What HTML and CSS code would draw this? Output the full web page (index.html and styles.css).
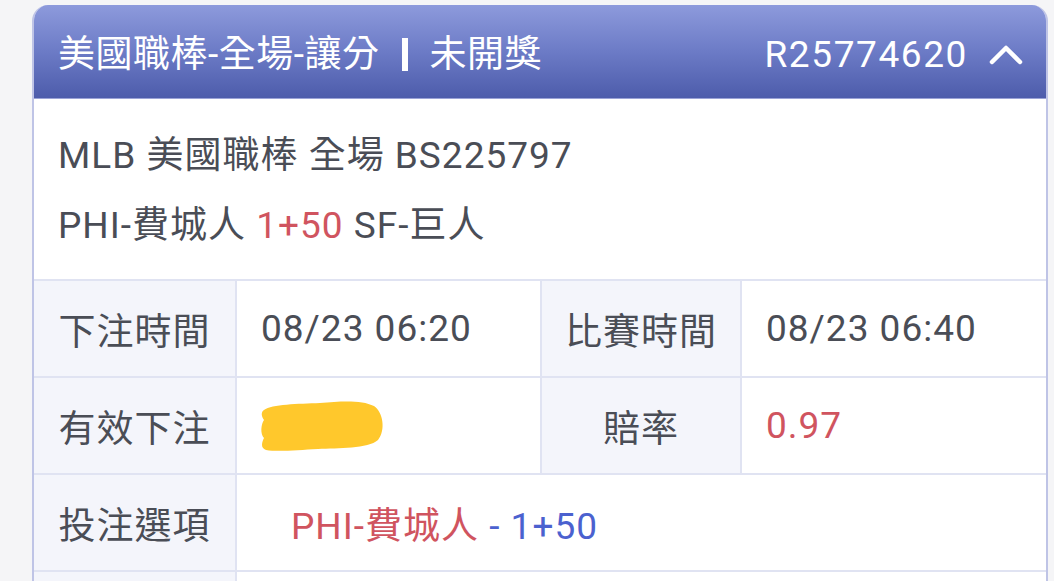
FILE: index.html
```html
<!DOCTYPE html>
<html lang="zh-Hant">
<head>
<meta charset="utf-8">
<link rel="stylesheet" href="styles.css">
</head>
<body>
<div class="card">
  <div class="card-head">
    <div class="head-title">
      <span>美國職棒-全場-讓分</span>
      <span class="sep"></span>
      <span>未開獎</span>
    </div>
    <div class="head-right">
      <span class="code">R25774620</span>
      <svg class="chev" width="36" height="20" viewBox="0 0 36 20"><path d="M4 17 L18 3 L32 17" fill="none" stroke="#fff" stroke-width="4.5" stroke-linecap="round" stroke-linejoin="round"/></svg>
    </div>
  </div>
  <div class="info">
    <div class="info-line">MLB 美國職棒 全場 BS225797</div>
    <div class="info-line">PHI-費城人 <span class="red">1+50</span> SF-巨人</div>
  </div>
  <table class="detail">
    <colgroup>
      <col class="c1"><col class="c2"><col class="c3"><col class="c4">
    </colgroup>
    <tr>
      <th>下注時間</th><td>08/23 06:20</td>
      <th>比賽時間</th><td>08/23 06:40</td>
    </tr>
    <tr>
      <th>有效下注</th>
      <td><svg class="blob" width="128" height="52" viewBox="0 0 128 52"><path d="M6 10 C14 4 40 4 62 3 C84 1 104 0 116 6 C125 12 128 30 120 40 C110 49 80 48 60 49 C40 50 20 52 8 50 C2 48 4 42 6 38 C2 34 3 24 6 20 C3 16 3 12 6 10 Z" fill="#ffc82c"/></svg></td>
      <th>賠率</th><td class="red">0.97</td>
    </tr>
    <tr>
      <th>投注選項</th>
      <td colspan="3" class="pick"><span class="red">PHI-費城人</span> <span class="blue">- 1+50</span></td>
    </tr>
    <tr>
      <th>&nbsp;</th>
      <td colspan="3">&nbsp;</td>
    </tr>
  </table>
</div>
</body>
</html>
```

FILE: styles.css
```css
html, body {
  margin: 0;
  padding: 0;
  background: #f5f5f7;
  height: 581px;
  overflow: hidden;
}
body {
  font-family: Roboto, "Noto Sans CJK TC", sans-serif;
  color: #4a4d56;
  letter-spacing: 1px;
}
.card {
  margin: 5px 0 0 32px;
  width: 1016px;
  background: #fff;
  border: 2px solid #bfc4e6;
  border-top: none;
  border-radius: 16px 16px 0 0;
  box-sizing: border-box;
  overflow: hidden;
}
.card-head {
  height: 94px;
  background: linear-gradient(180deg, #8d9adc 0%, #6c7bc6 50%, #4d5cab 100%);
  color: #fff;
  display: flex;
  align-items: center;
  justify-content: space-between;
  padding: 6px 22px 0 24px;
  font-size: 37px;
  border-bottom: 1px solid #9aa2d6;
  box-sizing: border-box;
  letter-spacing: 0.5px;
}
.head-title {
  display: flex;
  align-items: center;
  line-height: 1;
}
.sep {
  display: inline-block;
  width: 6px;
  height: 33px;
  background: #fff;
  margin: 0 21px 0 23px;
}
.head-right {
  display: flex;
  align-items: center;
}
.code {
  letter-spacing: 1.6px;
}
.chev {
  margin-left: 20px;
}
.info {
  padding: 22px 24px 18px;
  font-size: 37px;
}
.info-line {
  line-height: 70px;
}
.red { color: #d0545f; }
.blue { color: #4b61cf; }
.detail {
  width: 100%;
  border-collapse: collapse;
  font-size: 37px;
  table-layout: fixed;
}
.c1 { width: 202px; }
.c2 { width: 305px; }
.c3 { width: 200px; }
.c4 { width: auto; }
.detail tr {
  height: 97px;
}
.detail th, .detail td {
  border: 2px solid #e0e3f2;
  padding: 0 0 0 24px;
  font-weight: normal;
  vertical-align: middle;
  white-space: nowrap;
}
.detail th {
  background: #f4f5fb;
  text-align: center;
  padding: 0;
}
.detail th:first-child { border-left: none; }
.detail td:last-child { border-right: none; }
.detail td.pick {
  padding-left: 54px;
}
.blob {
  display: block;
  margin-left: -3px;
}
```
